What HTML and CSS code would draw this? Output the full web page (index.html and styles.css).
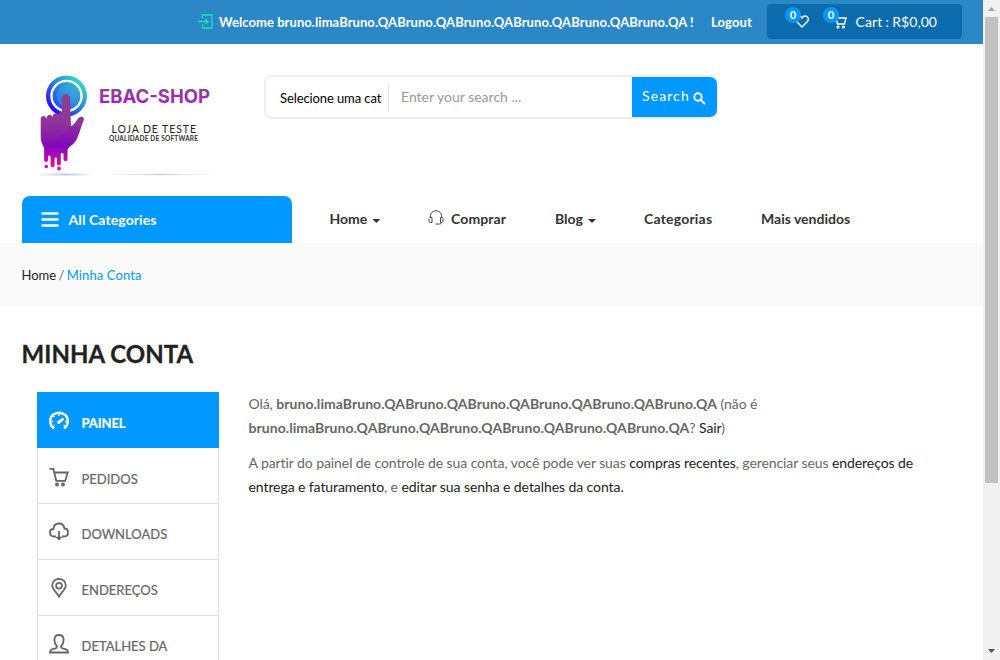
FILE: index.html
```html
<!DOCTYPE html>
<html lang="pt-BR">
<head>
<meta charset="utf-8">
<title>Minha Conta – EBAC Shop</title>
<link rel="stylesheet" href="styles.css">
</head>
<body>
<div class="page">
  <header>
    <div class="topbar">
      <svg class="login-icon" width="15" height="15" viewBox="0 0 15 15"><path d="M4.500 4.500V1h9.500v13H4.500v-3.500M0 7.500h10M7.500 5l2.500 2.500L7.500 10"/></svg>
      <span class="welcome">Welcome bruno.limaBruno.QABruno.QABruno.QABruno.QABruno.QABruno.QA !</span>
      <a class="logout">Logout</a>
      <div class="cart-box">
        <span class="cart-item wish"><svg width="14" height="13" viewBox="0 0 14 13"><path d="M7 12L1.600 6.600C-.5 4 1.500 1 4 1c1.400 0 2.400.8 3 2 .6-1.200 1.600-2 3-2 2.500 0 4.500 3 2.400 5.600z"/></svg><b class="badge">0</b></span>
        <span class="cart-item"><svg width="14" height="14" viewBox="0 0 14 14"><path d="M0 1.500h2.500l2 7.500h7l1.500-6H3M4.500 9h7.500"/><circle cx="5" cy="12" r=".9"/><circle cx="10.500" cy="12" r=".9"/></svg><b class="badge">0</b></span>
        <span class="cart-text">Cart : R$0,00</span>
      </div>
    </div>
    <div class="brand-row">
      <svg class="logo" width="200" height="116" viewBox="0 0 200 116">
        <defs>
          <linearGradient id="ring" x1="0" y1="1" x2="1" y2="0"><stop offset="0.15" stop-color="#2a08ff"/><stop offset="0.5" stop-color="#2e79dc"/><stop offset="0.9" stop-color="#30e8bd"/></linearGradient>
          <linearGradient id="disc" x1="0" y1="1" x2="1" y2="0"><stop offset="0" stop-color="#253bef"/><stop offset="1" stop-color="#36c8c9"/></linearGradient>
          <linearGradient id="hand" x1="0" y1="0" x2="0" y2="1"><stop offset="0" stop-color="#8e4090"/><stop offset="0.4" stop-color="#8e359b"/><stop offset="0.72" stop-color="#8509b9"/><stop offset="0.85" stop-color="#b009b4"/><stop offset="1" stop-color="#ed089f"/></linearGradient>
          <linearGradient id="word" x1="0" y1="0" x2="0" y2="1"><stop offset="0.2" stop-color="#8d4190"/><stop offset="0.85" stop-color="#a51bdb"/></linearGradient>
          <radialGradient id="shade"><stop offset="0" stop-color="#c9c9e6"/><stop offset="1" stop-color="#fff"/></radialGradient>
        </defs>
        <circle cx="44.500" cy="35" r="20.500" fill="url(#ring)"/>
        <circle cx="44.500" cy="35" r="16.200" fill="#fff"/>
        <circle cx="44.500" cy="35" r="13.900" fill="url(#disc)"/>
        <circle cx="45" cy="35" r="10.500" fill="#43b4ea" opacity=".3"/>
        <path fill="url(#hand)" d="M40 37c0-5.500 8-5.500 8 0l1 28c3-1 4.500-4 7-7.500 2.500-3.500 7.500-1.500 5.500 2.500C58 67 57 79 50 84c-3 2-4.500 3-4.500 6v8c0 3-4 3-4 0v-5c0-1.500-2.700-1.500-2.700 0v9.500c0 2.500-3.800 2.500-3.800 0V98c0-2-2.400-2-2.400 0v6c0 3-4 3-4 0v-8c0-2-2.500-2-2.500 0v3c0 2.500-4 2.500-4 0V88c0-3-3.400-6-3.400-12V58c0-4 5.300-4 5.800 0 0-5 5.500-5.500 6-1.500 0-5 5.500-5.500 6.500-1.500.2-4 2-4.500 3-3.500z"/>
        <path d="M18.700 79c15 0 28-6 29-14l8 1-5 18-6 4-22 0z" fill="#7900b7" opacity=".14"/>
        <circle cx="24.300" cy="105.500" r="1.800" fill="#e108a5"/><circle cx="37" cy="107.500" r="1.900" fill="#e108a5"/>
        <text class="logo-name" x="77" y="42" textLength="111" lengthAdjust="spacingAndGlyphs" fill="url(#word)">EBAC-SHOP</text>
        <text class="logo-sub" x="89.500" y="72" textLength="84.500">LOJA DE TESTE</text>
        <text class="logo-tag" x="87" y="79.800" textLength="89">QUALIDADE DE SOFTWARE</text>
        <ellipse cx="43" cy="113.500" rx="31" ry="2" fill="url(#shade)"/>
        <ellipse cx="139" cy="113.500" rx="55" ry="1.200" fill="url(#shade)"/>
      </svg>
      <form class="search">
        <span class="category">Selecione uma cat</span>
        <span class="query">Enter your search ...</span>
        <span class="submit">Search <svg width="13" height="13" viewBox="0 0 13 13"><circle cx="5" cy="5" r="3.700"/><path d="M7.800 7.800l4.200 4.200"/></svg></span>
      </form>
    </div>
    <nav class="nav">
      <div class="all-cats"><svg width="18" height="15" viewBox="0 0 18 15"><path d="M1.500 1.500h15M1.500 7.500h15M1.500 13.500h15"/></svg><span>All Categories</span></div>
      <a class="n-home">Home<i class="caret"></i></a>
      <a class="n-buy"><svg width="16" height="15" viewBox="0 0 16 15"><path d="M2.500 7V5.500C2.500 3 5 .7 8 .7S13.500 3 13.500 5.500V7M1.500 7.500H4v5H2.500c-1 0-1.500-.5-1.500-1.500V9M12.500 7.500H14c1 0 1 .5 1 1.500v2c0 1-.5 1.500-1.500 1.500h-1zM13.500 12.500c0 1-1 1.500-2 1.500H7.500"/></svg><span>Comprar</span></a>
      <a class="n-blog">Blog<i class="caret"></i></a>
      <a class="n-cats">Categorias</a>
      <a class="n-best">Mais vendidos</a>
    </nav>
  </header>
  <div class="crumbs"><span class="c-home">Home</span> / <span class="c-here">Minha Conta</span></div>
  <main>
    <h1>MINHA CONTA</h1>
    <div class="account">
      <ul class="menu">
        <li class="active"><svg viewBox="0 0 20 20"><path class="dial" d="M5 17.500C0 14 0 7.500 3.500 4.200c3.500-3.300 9.500-3.300 13 0C20 7.500 20 14 15 17.500"/><path class="ticks" d="M10 2v3M4 4.500l1.500 1.500M2 10.500h2M18 10.500h-2M4 15l1.500-1M16 15l-1.500-1"/><path class="needle" d="M9.800 11.200L14.500 7.500"/><circle cx="9.800" cy="11.200" r="1.700" fill="currentColor" stroke="none"/></svg><span>PAINEL</span></li>
        <li><svg viewBox="0 0 20 20"><path d="M.5 1.800h3.800l3 12h9l2.400-8.300H5.500"/><circle cx="8" cy="17.500" r="1.100"/><circle cx="14" cy="17.500" r="1.100"/></svg><span>PEDIDOS</span></li>
        <li><svg viewBox="0 0 20 20"><path d="M7 14.500H5C2.500 14.500 1 13 1 10.500S2.500 7 4.500 7C4.700 3.500 7 1.500 10 1.500c2.800 0 5 2 5.500 5 2.300 0 3.500 1.700 3.500 4s-1.500 4-4 4h-2M10 9v8M7.500 14.800l2.500 2.500 2.500-2.500"/></svg><span>DOWNLOADS</span></li>
        <li><svg viewBox="0 0 20 20"><path d="M10 18.500C8 15 3.200 11 3.200 7.500c0-8.700 13.600-8.700 13.600 0 0 3.500-4.800 7.500-6.800 11z"/><circle cx="10" cy="7.800" r="2.900"/></svg><span>ENDEREÇOS</span></li>
        <li><svg viewBox="0 0 20 20"><path d="M8 12.500c-2-2-2.600-4-2.600-6.500C5.400 2.500 7 1 10 1s4.600 1.500 4.600 5c0 2.500-.6 4.500-2.600 6.500 0 1 .5 1.500 1.500 1.800 3.500.9 5.500 1 5.500 4.200H1c0-3.200 2-3.300 5.500-4.200 1-.3 1.500-.8 1.500-1.800z"/></svg><span>DETALHES DA</span></li>
      </ul>
      <div class="content">
        <p>Olá, <b>bruno.limaBruno.QABruno.QABruno.QABruno.QABruno.QABruno.QA</b> (não é<br><b>bruno.limaBruno.QABruno.QABruno.QABruno.QABruno.QABruno.QA</b>? <a>Sair</a>)</p>
        <p>A partir do painel de controle de sua conta, você pode ver suas <a>compras recentes</a>, gerenciar seus <a>endereços de</a><br><a>entrega e faturamento</a>, e <a>editar sua senha e detalhes da conta.</a></p>
      </div>
    </div>
  </main>
</div>
<div class="scrollbar"><i class="up"></i><div class="thumb"></div><i class="down"></i></div>
</body>
</html>
```
FILE: styles.css
```css
* { box-sizing: border-box; }
body { margin: 0; width: 1000px; height: 660px; overflow: hidden; display: flex; background: #fff; font: 14px/24px Lato, sans-serif; color: #666; }
svg { display: block; flex: none; fill: none; stroke: currentColor; stroke-width: 1.2; }
.page { width: 983px; height: 660px; overflow: hidden; }

.topbar { height: 44px; background: #2b87c5; color: #fff; display: flex; align-items: center; padding: 0 21px 1px 198px; white-space: nowrap; }
.login-icon { color: #18e3bd; stroke-width: 1.3; }
.welcome { margin-left: 6px; width: 492px; font-weight: 700; font-size: 13px; letter-spacing: .065px; }
.logout { width: 56px; font-weight: 700; font-size: 13px; letter-spacing: .1px; }
.cart-box { width: 195px; height: 35px; border-radius: 4px; background: #0b6bad; display: flex; align-items: center; padding-left: 29px; }
.cart-item { position: relative; width: 38px; }
.badge { position: absolute; left: -11px; top: -8px; width: 16px; height: 16px; border-radius: 50%; background: #0199ff; font-size: 11px; line-height: 16px; text-align: center; }
.cart-item svg { stroke-width: 1.400; margin-left: -1px; }
.cart-item:nth-child(2) { width: 22px; }
.cart-text { font-size: 14px; margin-left: -.5px; letter-spacing: .08px; word-spacing: -.5px; }

.brand-row { height: 152px; padding: 17px 0 0 22px; display: flex; align-items: flex-start; gap: 42px; }
.logo text { stroke: none; }
.logo-name { font: 700 19px Inter, sans-serif; }
.logo-sub { font: 10.500px Lato, sans-serif; fill: #222; }
.logo-tag { font: 700 6.500px Lato, sans-serif; fill: #333; }
.logo circle, .logo ellipse, .logo path { stroke: none; }
.search { width: 454px; height: 44px; margin-top: 14px; border: 2px solid #eee; border-radius: 7px; display: flex; align-items: center; color: #999; }
.category { width: 123px; height: 30px; padding: 4px 0 0 14px; border-right: 1px solid #e8e8e8; font-size: 13px; letter-spacing: -.1px; color: #000; white-space: nowrap; }
.query { width: 243px; padding-left: 12px; }
.submit { flex: 1; height: 40px; margin-right: -1px; padding: 0 0 2px 10px; border-radius: 0 7px 7px 0; background: #0199ff; color: #fff; display: flex; align-items: center; gap: 3px; letter-spacing: 1.1px; }
.submit svg { stroke-width: 1.900; margin-top: 4px; }

.nav { height: 48px; display: flex; padding-left: 22px; border-bottom: 1px solid #f7f7f7; background: #fff; color: #333; font-weight: 700; line-height: 46px; white-space: nowrap; }
.nav a { display: flex; align-items: center; height: 46px; }
.all-cats { width: 270px; height: 47px; margin-right: 37.500px; border-radius: 8px 8px 0 0; background: #0199ff; color: #fff; display: flex; align-items: center; padding-left: 19px; gap: 9.500px; letter-spacing: .1px; }
.all-cats svg { stroke-width: 2.500; stroke-linecap: round; }
.caret { width: 8px; height: 4px; margin: 4px 0 0 5px; background: currentColor; clip-path: polygon(0 0, 100% 0, 50% 100%); }
.n-home { width: 98.500px; }
.n-buy { width: 127px; gap: 7px; letter-spacing: .12px; }
.n-buy svg { stroke-width: .9; margin-bottom: 3px; }
.n-blog { width: 89px; }
.n-cats { width: 117px; letter-spacing: .2px; }

.crumbs { height: 62px; padding: 19px 0 0 21.500px; background: #fafafa; font-size: 13px; word-spacing: -1px; }
.c-home { color: #222; }
.c-here { color: #0199ff; word-spacing: 0; letter-spacing: .12px; }

h1 { margin: 0; height: 86px; padding: 33px 0 0 21.500px; font-size: 24px; line-height: 30px; letter-spacing: .05px; color: #222; -webkit-text-stroke: .3px currentColor; }
.account { display: flex; padding-left: 37px; gap: 29.500px; }
.menu { margin: 0; padding: 0; list-style: none; width: 182px; border: 1px solid #ddd; border-top: 0; font-size: 13px; }
.menu li { height: 56px; padding: 6px 0 0 11px; display: flex; align-items: center; gap: 12.500px; border-bottom: 1px solid #ddd; white-space: nowrap; }
.menu li:nth-child(2) { padding-top: 7px; }
.menu li:nth-child(3) { height: 55.500px; }
.menu svg { width: 20px; height: 20px; stroke-width: 1.800; margin-bottom: 5px; }
.menu span { -webkit-text-stroke: .2px currentColor; }
.menu .active { margin: 0 -1px; padding-left: 12px; background: #0199ff; color: #fff; font-weight: 700; letter-spacing: -.1px; border: 0; }
.menu .dial { stroke-width: 2.400; }
.menu .ticks { stroke-width: 1.300; }
.menu .needle { stroke-width: 2.400; }
.content { white-space: nowrap; letter-spacing: -.08px; }
.content b { letter-spacing: .055px; }
.content p { margin: 0 0 11px; }
.content a { color: #222; }

.scrollbar { width: 17px; height: 660px; background: #f1f1f1; display: flex; flex-direction: column; align-items: center; }
.up, .down { width: 7px; height: 4px; }
.up { margin: 7px 0 6px; background: #a3a3a3; clip-path: polygon(50% 0, 100% 100%, 0 100%); }
.thumb { width: 13px; height: 466px; background: #c1c1c1; }
.down { margin: auto 0 7px; background: #505050; clip-path: polygon(0 0, 100% 0, 50% 100%); }
```
